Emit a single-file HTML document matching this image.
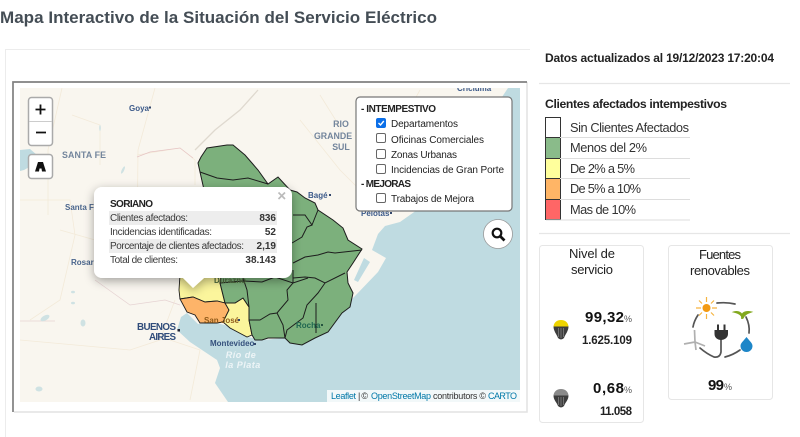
<!DOCTYPE html>
<html lang="es"><head><meta charset="utf-8"><title>Mapa Interactivo</title>
<style>
html,body{margin:0;padding:0;background:#fff;width:800px;height:437px;overflow:hidden}
svg{display:block;filter:blur(.3px)}
text{font-family:"Liberation Sans",sans-serif;fill:#222}
.m{fill:#5f7391;font-weight:bold}
.p{font-size:10px;fill:#3a3a3a}
.lg{font-size:12.800px;fill:#333}
.c{font-size:10px;fill:#222}
</style></head><body>
<svg width="800" height="437" viewBox="0 0 800 437" xmlns="http://www.w3.org/2000/svg">
<defs>
<filter id="sh" x="-20%" y="-20%" width="140%" height="150%"><feDropShadow dx="0" dy="3" stdDeviation="5" flood-color="#000" flood-opacity=".35"/></filter>
<clipPath id="mc"><rect x="20" y="88" width="500" height="314"/></clipPath>
</defs>
<rect width="800" height="437" fill="#fff"/>
<text x="0" y="23" font-size="17" font-weight="bold" textLength="437" style="fill:#444d55">Mapa Interactivo de la Situación del Servicio Eléctrico</text>

<path d="M5.500 437V49.500H530" fill="none" stroke="#ececec"/>
<path d="M14 412H527V82" fill="none" stroke="#e2e2e2" stroke-width="1.500"/>
<path d="M13 412V82H527" fill="none" stroke="#808080" stroke-width="1.700"/>

<g clip-path="url(#mc)">
<rect x="20" y="88" width="500" height="314" fill="#bfdbe1"/>
<path d="M20 88H508L480 130 450 170 417 210 400 222 385 226 378 234 372 250 386 258 378 272 355 296 318 333 302 345 285 338 262 340 248 337 232 327 217 323 198 324 187 313 181 317 177 330 190 342 217 360 220 368 215 383 228 402H20Z" fill="#f9f6ef"/>
<path d="M364 258 370 262 358 282 354 280Z" fill="#bfdbe1"/>
<path d="M20 150 30 149 37 155 33 165 24 170 20 171Z" fill="#bfdbe1"/>
<g fill="none" stroke="#f3ead9" stroke-width=".8">
<path d="M62 88 48 150 48 215M155 88 138 150 137 250M20 200H70L75 235 60 300 30 320M72 115 100 125 100 165M137 155 180 148 195 160M195 160 195 185M175 300 160 340 130 350 20 340M170 340 200 350 190 400M60 230 130 250M300 120 340 170 360 190M320 95 345 135M370 180 420 90"/>
</g>
<path d="M137 157 150 152 165 150 180 148 193 158" fill="none" stroke="#e6c4c4" stroke-width=".7"/>
<path d="M195 150 215 130 240 110 258 90" fill="none" stroke="#dfd9cf" stroke-width="1.300"/>
<path d="M20 321H55M95 280 130 305 165 300 180 305" fill="none" stroke="#e6d3d3" stroke-width=".7"/>
<g fill="#cfe2e3">
<ellipse cx="45" cy="318" rx="5" ry="2.500" transform="rotate(-30 45 318)"/><ellipse cx="83" cy="323" rx="2.500" ry="3.500"/><ellipse cx="39" cy="389" rx="3.500" ry="2.500"/><ellipse cx="73" cy="292" rx="2" ry="1.300"/><ellipse cx="73" cy="303" rx="2" ry="1.300"/><ellipse cx="100" cy="128" rx=".8" ry="3"/><ellipse cx="123" cy="170" rx="1.200" ry="4" transform="rotate(25 123 170)"/>
</g>
<text x="129" y="111" font-size="8" class="m" style="fill:#3c5a8a">Goya</text><rect x="149" y="106.500" width="2" height="2" fill="#33476b"/>
<text x="62" y="158" font-size="8.800" class="m" textLength="44" style="fill:#73859c">SANTA FE</text>
<text x="65" y="210" font-size="8" class="m" style="fill:#4a658c">Santa Fe</text>
<text x="71" y="265" font-size="8" class="m" style="fill:#4a658c">Rosario</text>
<text x="341" y="127" font-size="8.800" text-anchor="middle" class="m" style="fill:#73859c">RIO</text><text x="333" y="139" font-size="8.800" text-anchor="middle" class="m" style="fill:#73859c">GRANDE</text><text x="341" y="150" font-size="8.800" text-anchor="middle" class="m" style="fill:#73859c">SUL</text>
<text x="308" y="198" font-size="8" class="m" style="fill:#3c5a8a">Bagé</text><rect x="329" y="194" width="2" height="2" fill="#33476b"/>
<text x="361" y="216" font-size="8" class="m" style="fill:#3c5a8a">Pelotas</text><rect x="390" y="212" width="2" height="2" fill="#33476b"/>
<text x="457" y="91" font-size="8" class="m" style="fill:#3c5a8a">Criciúma</text>

<path d="M180 275 222 275 220 283 225 303 217 301 205 302 193 297 180 299 179 290Z" fill="#fbf59c" stroke="#1d1d1d" stroke-width=".9"/>
<path d="M180 299 193 297 205 302 217 301 225 303 229 310 223 322 217 323 200 323 195 315 187 312Z" fill="#fdb469" stroke="#1d1d1d" stroke-width=".9"/>
<path d="M225 303 235 303 243 298 249 307 249 320 252 335 247 337 230 328 223 322 229 310Z" fill="#fbf59c" stroke="#1d1d1d" stroke-width=".9"/>
<path d="M198 163 201 157 207 148 227 145 233 145 245 155 258 170 268 184 278 177 290 190 297 192 305 198 315 203 318 210 333 220 343 228 348 240 362 249 353 263 347 272 348 283 353 293 350 307 342 313 328 332 315 338 302 345 290 343 285 338 268 338 262 340 255 340 252 335 249 320 249 307 243 298 235 303 225 303 220 283 222 270 200 172Z" fill="#7cb07c" stroke="#1d1d1d" stroke-width="1"/>
<g fill="none" stroke="#1d1d1d" stroke-width="1">
<path d="M200 172 217 178 233 180 248 178 268 184"/>
<path d="M293 215 305 215 312 225 318 210M312 225 307 227 302 237 292 243"/>
<path d="M293 263 305 257 318 255 328 252 335 253 362 250"/>
<path d="M293 278 305 277 315 278 325 283 345 273"/>
<path d="M325 283 318 293 307 305 303 318 287 330 285 338"/>
<path d="M316 303 316 333"/>
<path d="M293 270 293 283 287 290 288 300 277 313 270 314 260 320 249 320"/>
<path d="M277 313 283 325 285 338"/>
<path d="M243 278 247 290 249 307"/>
<path d="M220 283 243 281 262 282 275 277 293 283 308 278"/>
</g>
<text x="214" y="283" font-size="8" class="m" style="fill:#4e6a3c">Durazno</text>
<text x="204" y="323" font-size="8" class="m" style="fill:#8f5a1a">San José</text><rect x="238" y="319" width="2" height="2" fill="#33476b"/>
<text x="296" y="328" font-size="8" class="m" style="fill:#1f6650">Rocha</text><rect x="321" y="324" width="2" height="2" fill="#24543f"/>
<text x="210" y="346" font-size="8" class="m" style="fill:#34507c">Montevideo</text><rect x="254" y="343" width="2" height="2" fill="#33476b"/>
<text x="241" y="358" font-size="9" font-style="italic" text-anchor="middle" style="fill:#eef5f7;font-weight:bold;letter-spacing:.5px">Río de</text>
<text x="243" y="368" font-size="9" font-style="italic" text-anchor="middle" style="fill:#eef5f7;font-weight:bold;letter-spacing:.5px">la Plata</text>
<text x="137" y="330" font-size="9.800" class="m" textLength="39" style="fill:#304c7a">BUENOS</text>
<text x="149" y="340" font-size="9.800" class="m" textLength="27" style="fill:#304c7a">AIRES</text><rect x="177.500" y="329" width="2.500" height="2.500" fill="#223"/>
<rect x="327" y="390" width="193" height="12" fill="#fff" opacity=".8"/>
<g font-size="9">
<text x="331" y="399" textLength="25" style="fill:#0078a8">Leaflet</text>
<text x="358" y="399" textLength="10" style="fill:#333">| ©</text>
<text x="371" y="399" textLength="60" style="fill:#0078a8">OpenStreetMap</text>
<text x="433" y="399" textLength="53" style="fill:#333">contributors ©</text>
<text x="488" y="399" textLength="29" style="fill:#0078a8">CARTO</text>
</g>
</g>

<rect x="28.500" y="97.500" width="24" height="48" rx="3" fill="#fff" stroke="#aaa" stroke-width="1.500"/>
<path d="M29 121.500H52" stroke="#ccc"/>
<path d="M35.500 109.500h10M40.500 104.500v10M36 132.500h10" stroke="#111" stroke-width="1.800" fill="none"/>
<rect x="28.500" y="154.500" width="24" height="24" rx="3" fill="#fff" stroke="#aaa" stroke-width="1.500"/>
<path d="M35 171.500 38 162h5l3 9.500h-4l-.5-3h-2l-.5 3Z" fill="#111"/>

<rect x="356" y="97" width="156" height="114" rx="4" fill="#fff" stroke="#777" stroke-width="1.200"/>
<text x="361" y="112" style="font-size:10px;font-weight:bold;fill:#222" textLength="75">- INTEMPESTIVO</text>
<rect x="376.500" y="118.500" width="9" height="9" rx="1.500" fill="#0b6fe8" stroke="#0b6fe8"/>
<path d="M378.500 123l2 2 3.300-4" fill="none" stroke="#fff" stroke-width="1.400"/>
<rect x="376.500" y="133.500" width="9" height="9" rx="1.500" fill="#fff" stroke="#666"/>
<rect x="376.500" y="149.500" width="9" height="9" rx="1.500" fill="#fff" stroke="#666"/>
<rect x="376.500" y="164.500" width="9" height="9" rx="1.500" fill="#fff" stroke="#666"/>
<rect x="376.500" y="193.500" width="9" height="9" rx="1.500" fill="#fff" stroke="#666"/>
<text x="391" y="127" class="c" textLength="67">Departamentos</text>
<text x="391" y="143" class="c" textLength="93">Oficinas Comerciales</text>
<text x="391" y="158" class="c" textLength="66">Zonas Urbanas</text>
<text x="391" y="173" class="c" textLength="113">Incidencias de Gran Porte</text>
<text x="361" y="187" class="c" style="font-weight:bold" textLength="50">- MEJORAS</text>
<text x="391" y="202" class="c" textLength="83">Trabajos de Mejora</text>

<circle cx="498" cy="234" r="14.500" fill="#fff" stroke="#999" stroke-width=".8"/>
<circle cx="497" cy="233" r="4.300" fill="none" stroke="#111" stroke-width="2.200"/>
<path d="M500 236l4.500 4.500" stroke="#111" stroke-width="2.700"/>

<g filter="url(#sh)"><path d="M102 187H284a8 8 0 0 1 8 8V270a8 8 0 0 1-8 8H204L193 288 183 278H102a8 8 0 0 1-8-8V195a8 8 0 0 1 8-8Z" fill="#fff"/></g>
<text x="110" y="207" font-size="10" style="fill:#222;font-weight:bold" textLength="43">SORIANO</text>
<path d="M278.500 192.500l6.500 6.500M285 192.500l-6.500 6.500" stroke="#bbb" stroke-width="1.700"/>
<rect x="109" y="211" width="168" height="14" fill="#ededed"/>
<rect x="109" y="239" width="168" height="14" fill="#ededed"/>
<text x="110" y="221" class="p" textLength="78">Clientes afectados:</text>
<text x="110" y="235" class="p" textLength="102">Incidencias identificadas:</text>
<text x="110" y="249" class="p" textLength="134">Porcentaje de clientes afectados:</text>
<text x="110" y="263" class="p" textLength="68">Total de clientes:</text>
<text x="276" y="221" font-size="10" text-anchor="end" style="fill:#333;font-weight:bold">836</text>
<text x="276" y="235" font-size="10" text-anchor="end" style="fill:#333;font-weight:bold">52</text>
<text x="276" y="249" font-size="10" text-anchor="end" style="fill:#333;font-weight:bold">2,19</text>
<text x="276" y="263" font-size="10" text-anchor="end" style="fill:#333;font-weight:bold">38.143</text>

<text x="545" y="62" font-size="12" style="fill:#222;font-weight:bold" textLength="229">Datos actualizados al 19/12/2023 17:20:04</text>
<path d="M539 83.500H790M539 233.500H790" stroke="#e6e6e6" stroke-width="1.200"/>
<text x="545" y="108" font-size="12.200" style="fill:#222;font-weight:bold" textLength="182">Clientes afectados intempestivos</text>
<rect x="545.500" y="117.500" width="15" height="20" fill="#fff"/>
<rect x="545.500" y="137.500" width="15" height="21" fill="#8abb8a"/>
<rect x="545.500" y="158.500" width="15" height="20" fill="#ffff9c"/>
<rect x="545.500" y="178.500" width="15" height="21" fill="#ffb566"/>
<rect x="545.500" y="199.500" width="15" height="20" fill="#ff6666"/>
<path d="M545.500 117.500H560.500V219.500H545.500ZM545.500 137.500h15M545.500 158.500h15M545.500 178.500h15M545.500 199.500h15" fill="none" stroke="#333"/>
<path d="M560 137.500H690M560 158.500H690M560 178.500H690M560 199.500H690M546 220H690" stroke="#ddd"/>
<text x="570" y="132" class="lg" textLength="119">Sin Clientes Afectados</text>
<text x="570" y="152" class="lg" textLength="77">Menos del 2%</text>
<text x="570" y="173" class="lg" textLength="65">De 2% a 5%</text>
<text x="570" y="193" class="lg" textLength="71">De 5% a 10%</text>
<text x="570" y="214" class="lg" textLength="66">Mas de 10%</text>

<rect x="539.500" y="245.500" width="104" height="177" rx="3" fill="#fff" stroke="#e6e6e6"/>
<text x="592" y="258" font-size="13" text-anchor="middle" textLength="46" style="fill:#222">Nivel de</text>
<text x="592" y="274" font-size="13" text-anchor="middle" textLength="42" style="fill:#222">servicio</text>
<text x="585" y="322" font-size="15" style="fill:#111;font-weight:bold" textLength="39">99,32</text><text x="624" y="322" font-size="9" style="fill:#555">%</text>
<text x="632" y="344" font-size="11.500" text-anchor="end" style="fill:#222;font-weight:bold" textLength="50">1.625.109</text>
<text x="593" y="393" font-size="15" style="fill:#111;font-weight:bold" textLength="31">0,68</text><text x="624" y="393" font-size="9" style="fill:#555">%</text>
<text x="632" y="415" font-size="11.500" text-anchor="end" style="fill:#222;font-weight:bold" textLength="32">11.058</text>
<path d="M553.500 327c0-4 3-7 7.500-7s7.500 3 7.500 7Z" fill="#eed400"/>
<path d="M553.500 326.500H568.500C568.500 331 565.500 334 564 338Q561 341 558 338C556.500 334 553.500 331 553.500 326.500Z" fill="#3d3d3d"/>
<path d="M558.500 328v9M561 328v10M563.500 328v9" stroke="#8a8a8a" stroke-width=".7"/>
<path d="M553.500 396c0-4 3-7 7.500-7s7.500 3 7.500 7Z" fill="#8a8a8a"/>
<path d="M553.500 395.500H568.500C568.500 400 565.500 402 564 406Q561 409 558 406C556.500 402 553.500 400 553.500 395.500Z" fill="#3d3d3d"/>
<path d="M558.500 397v8M561 397v9M563.500 397v8" stroke="#8a8a8a" stroke-width=".7"/>

<rect x="668.500" y="245.500" width="104" height="154" rx="3" fill="#fff" stroke="#e6e6e6"/>
<text x="720" y="259" font-size="13" text-anchor="middle" textLength="42" style="fill:#222">Fuentes</text>
<text x="720" y="275" font-size="13" text-anchor="middle" textLength="60" style="fill:#222">renovables</text>
<text x="708" y="390" font-size="15" style="fill:#111;font-weight:bold" textLength="16">99</text><text x="724" y="390" font-size="9" style="fill:#555">%</text>
<g fill="none" stroke="#555" stroke-width="1.700" stroke-linecap="round">
<path d="M717 303Q727 302 735 304"/><path d="M746 317Q750 325 749 333"/><path d="M740 350Q733 355 725 357"/><path d="M693 327Q694 321 698 315"/>
<path d="M700 348Q707 354 714 357 720 358 721 352V339"/>
</g>
<circle cx="706.500" cy="308" r="4" fill="#f39a12"/>
<path d="M706.500 297v5M706.500 314v5M696 308h5M712 308h5M699 300.500l3 3M711 312.500l3 3M699 315.500l3-3M711 303.500l3-3" stroke="#f6b440" stroke-width="1.200"/>
<path d="M742 318c0-3-4-5-8-6 3-1 7 0 8 3 1-3 5-4 9-3-3 1-7 3-8 6Z" fill="#82a81e" stroke="#82a81e" stroke-width="1.300"/>
<path d="M742 315v4" stroke="#82a81e" stroke-width="1.600"/>
<path d="M714.500 330H728V334C728 338 724 340 721 340S714.500 338 714.500 334Z" fill="#333"/>
<path d="M718 324.500V330M724.500 324.500V330" stroke="#333" stroke-width="2"/>
<path d="M746.500 337c-3 4-6 6-6 9a6 6 0 0 0 12 0c0-3-3-5-6-9Z" fill="#1d86c8"/>
<path d="M695 342 694.500 330M695 342 684 344M695 342 705 346M695 342 696 350" stroke="#b0b0b0" stroke-width="1.700"/>
</svg>
</body></html>
